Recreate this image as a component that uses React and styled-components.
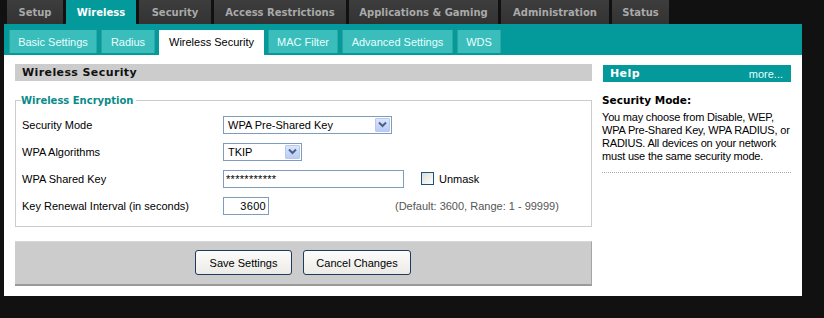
import React from 'react'
import styled, { createGlobalStyle } from 'styled-components'

const GlobalStyle = createGlobalStyle`
  html, body {
    margin: 0;
    padding: 0;
    background: #111111;
  }
  body {
    font-family: "Liberation Sans", Arial, sans-serif;
    font-size: 11px;
    color: #000;
  }
`

const mainTabs = [
  { label: 'Setup', width: 56 },
  { label: 'Wireless', width: 70, active: true },
  { label: 'Security', width: 72 },
  { label: 'Access Restrictions', width: 132 },
  { label: 'Applications & Gaming', width: 149 },
  { label: 'Administration', width: 108 },
  { label: 'Status', width: 57 },
]

const subTabs = [
  { label: 'Basic Settings', width: 88 },
  { label: 'Radius', width: 54 },
  { label: 'Wireless Security', width: 105, active: true },
  { label: 'MAC Filter', width: 70 },
  { label: 'Advanced Settings', width: 111 },
  { label: 'WDS', width: 44 },
]

const Chevron = () => (
  <svg width="9" height="7" viewBox="0 0 9 7">
    <path d="M1 1.5 L4.5 5 L8 1.5" fill="none" stroke="#4d6185" strokeWidth="2" />
  </svg>
)

const Select = ({ value, width }) => (
  <SelectBox $width={width}>
    <SelectValue>{value}</SelectValue>
    <SelectButton>
      <Chevron />
    </SelectButton>
  </SelectBox>
)

const App = () => (
  <Page>
    <GlobalStyle />
    <TopNav>
      {mainTabs.map(t => (
        <MainTab key={t.label} $width={t.width} $active={t.active}>
          {t.label}
        </MainTab>
      ))}
    </TopNav>
    <Frame>
      <SubBar>
        {subTabs.map(t => (
          <SubTab key={t.label} $width={t.width} $active={t.active}>
            {t.label}
          </SubTab>
        ))}
      </SubBar>
      <Content>
        <MainColumn>
          <SectionHeader>Wireless Security</SectionHeader>
          <Group>
            <Legend>Wireless Encryption</Legend>
            <Row>
              <Label>Security Mode</Label>
              <Select value="WPA Pre-Shared Key" width={169} />
            </Row>
            <Row>
              <Label>WPA Algorithms</Label>
              <Select value="TKIP" width={79} />
            </Row>
            <Row>
              <Label>WPA Shared Key</Label>
              <TextField $width={181}>***********</TextField>
              <CheckWrap>
                <CheckBox />
                Unmask
              </CheckWrap>
            </Row>
            <Row>
              <Label>Key Renewal Interval (in seconds)</Label>
              <TextField $width={46} $right>3600</TextField>
              <Hint>(Default: 3600, Range: 1 - 99999)</Hint>
            </Row>
          </Group>
          <ButtonBar>
            <Button $width={97}>Save Settings</Button>
            <Button $width={108}>Cancel Changes</Button>
          </ButtonBar>
        </MainColumn>
        <HelpColumn>
          <HelpHeader>
            <HelpTitle>Help</HelpTitle>
            <More>more...</More>
          </HelpHeader>
          <HelpTerm>Security Mode:</HelpTerm>
          <HelpText>
            You may choose from Disable, WEP, WPA Pre-Shared Key, WPA RADIUS, or
            RADIUS. All devices on your network must use the same security mode.
          </HelpText>
        </HelpColumn>
      </Content>
    </Frame>
  </Page>
)

const Page = styled.div`
  width: 824px;
  height: 318px;
  background: #111111;
  overflow: hidden;
`

const TopNav = styled.div`
  display: flex;
  gap: 3px;
  padding-left: 7px;
  height: 24px;
`

const MainTab = styled.div`
  width: ${p => p.$width}px;
  height: 24px;
  display: flex;
  align-items: center;
  justify-content: center;
  font-family: "DejaVu Sans", Verdana, sans-serif;
  font-weight: bold;
  font-size: 10px;
  color: ${p => (p.$active ? '#ffffff' : '#a9a9a9')};
  background: ${p => (p.$active ? '#04999a' : 'linear-gradient(#3d3d3d, #333333)')};
`

const Frame = styled.div`
  width: 798px;
  margin-left: 4px;
`

const SubBar = styled.div`
  display: flex;
  align-items: flex-start;
  gap: 4px;
  height: 31px;
  padding: 6px 0 0 5px;
  box-sizing: border-box;
  background: #04999a;
`

const SubTab = styled.div`
  width: ${p => p.$width}px;
  height: ${p => (p.$active ? 25 : 23)}px;
  display: flex;
  align-items: center;
  justify-content: center;
  box-sizing: border-box;
  padding-bottom: ${p => (p.$active ? 2 : 0)}px;
  font-size: 11px;
  color: ${p => (p.$active ? '#000000' : '#e6ffff')};
  background: ${p => (p.$active ? '#ffffff' : '#3bbdbb')};
  border-left: 1px solid ${p => (p.$active ? '#ffffff' : '#2aa3a1')};
  border-right: 1px solid ${p => (p.$active ? '#ffffff' : '#2fa8a6')};
`

const Content = styled.div`
  height: 241px;
  background: #ffffff;
  display: flex;
  gap: 10px;
  padding: 9px 0 0 11px;
  box-sizing: border-box;
`

const MainColumn = styled.div`
  width: 577px;
  display: flex;
  flex-direction: column;
`

const SectionHeader = styled.div`
  height: 17px;
  line-height: 17px;
  padding-left: 7px;
  background: #cccccc;
  font-family: "DejaVu Sans", Verdana, sans-serif;
  font-weight: bold;
  font-size: 11px;
  letter-spacing: 0.4px;
  color: #111111;
`

const Group = styled.fieldset`
  margin: 14px 0 0;
  padding: 5px 0 4px 6px;
  border: 1px solid #cccccc;
  height: 132px;
  box-sizing: border-box;
  min-width: 0;
`

const Legend = styled.legend`
  padding: 0 3px 0 0;
  margin-left: -1px;
  font-family: "DejaVu Sans", Verdana, sans-serif;
  font-weight: bold;
  font-size: 10px;
  color: #0a8a8a;
  background: #ffffff;
`

const Row = styled.div`
  display: flex;
  align-items: center;
  height: 27px;
`

const Label = styled.div`
  width: 201px;
  flex: none;
`

const SelectBox = styled.div`
  width: ${p => p.$width}px;
  height: 18px;
  box-sizing: border-box;
  border: 1px solid #7f9db9;
  background: #ffffff;
  display: flex;
  align-items: center;
  padding: 1px;
`

const SelectValue = styled.div`
  flex: 1;
  padding-left: 3px;
`

const SelectButton = styled.div`
  width: 15px;
  height: 14px;
  display: flex;
  align-items: center;
  justify-content: center;
  background: linear-gradient(#dbe6fd, #b8ccf7);
  border: 1px solid #b9c9ee;
  box-sizing: border-box;
  border-radius: 1px;
`

const TextField = styled.div`
  width: ${p => p.$width}px;
  height: 18px;
  box-sizing: border-box;
  border: 1px solid #7f9db9;
  display: flex;
  align-items: center;
  justify-content: ${p => (p.$right ? 'flex-end' : 'flex-start')};
  padding: 0 2px;
  letter-spacing: 0.3px;
`

const CheckWrap = styled.div`
  display: flex;
  align-items: center;
  gap: 5px;
  margin-left: 17px;
`

const CheckBox = styled.div`
  width: 13px;
  height: 13px;
  box-sizing: border-box;
  border: 1px solid #1c5180;
  background: linear-gradient(135deg, #dcdcd7, #ffffff);
`

const Hint = styled.div`
  margin-left: 126px;
  color: #555555;
`

const ButtonBar = styled.div`
  margin-top: 14px;
  height: 45px;
  box-sizing: border-box;
  background: #cccccc;
  border-top: 1px solid #d8d8d8;
  border-bottom: 2px solid #9a9a9a;
  border-right: 1px solid #a5a5a5;
  display: flex;
  align-items: center;
  justify-content: center;
  gap: 11px;
  padding-bottom: 1px;
`

const Button = styled.div`
  width: ${p => p.$width}px;
  height: 25px;
  box-sizing: border-box;
  border: 1px solid #1c3b5e;
  border-radius: 3px;
  background: linear-gradient(#fcfcfb, #ecebe6);
  display: flex;
  align-items: center;
  justify-content: center;
  font-size: 11px;
`

const HelpColumn = styled.div`
  width: 189px;
  display: flex;
  flex-direction: column;
`

const HelpHeader = styled.div`
  height: 17px;
  background: #04999a;
  display: flex;
  align-items: center;
  justify-content: space-between;
  padding: 0 8px 0 7px;
  margin-left: 1px;
  margin-top: 1px;
`

const HelpTitle = styled.div`
  font-family: "DejaVu Sans", Verdana, sans-serif;
  font-weight: bold;
  font-size: 11px;
  letter-spacing: 0.4px;
  color: #ffffff;
`

const More = styled.div`
  font-size: 11px;
  color: #e6ffff;
`

const HelpTerm = styled.div`
  margin-top: 12px;
  font-family: "DejaVu Sans", Verdana, sans-serif;
  font-weight: bold;
  font-size: 10.5px;
`

const HelpText = styled.p`
  margin: 5px 0 0;
  line-height: 13px;
  letter-spacing: -0.2px;
  padding-bottom: 9px;
  border-bottom: 1px dotted #aaaaaa;
`

export default App
